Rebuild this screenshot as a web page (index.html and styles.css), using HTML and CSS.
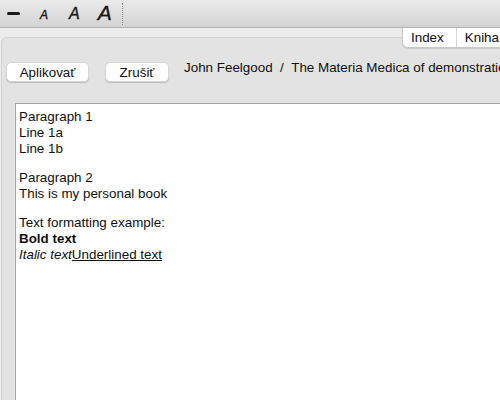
FILE: index.html
```html
<!DOCTYPE html>
<html>
<head>
<meta charset="utf-8">
<link rel="stylesheet" href="styles.css">
</head>
<body>
<div class="window">
  <div class="toolbar">
    <span class="tool dash"></span>
    <span class="tool a a-s">A</span>
    <span class="tool a a-m">A</span>
    <span class="tool a a-l">A</span>
    <span class="sep"></span>
  </div>
  <div class="main">
    <div class="segment">
      <span class="seg seg-first">Index</span>
      <span class="seg">Kniha</span>
    </div>
    <div class="panel">
      <div class="actions">
        <button class="btn btn-apply">Aplikovať</button>
        <button class="btn btn-cancel">Zrušiť</button>
        <span class="crumb">John Feelgood&nbsp; / &nbsp;The Materia Medica of demonstration</span>
      </div>
      <div class="editor">
        <p>Paragraph 1<br>Line 1a<br>Line 1b</p>
        <p>Paragraph 2<br>This is my personal book</p>
        <p>Text formatting example:<br><b>Bold text</b><br><i>Italic text</i><u>Underlined text</u></p>
      </div>
    </div>
  </div>
</div>
</body>
</html>
```
FILE: styles.css
```css
html, body {
  margin: 0;
  padding: 0;
}
body {
  width: 500px;
  height: 400px;
  overflow: hidden;
  background: #ececec;
  font-family: "Liberation Sans", Arial, sans-serif;
  font-size: 13.4px;
  color: #111;
}
.window {
  display: flex;
  flex-direction: column;
  height: 400px;
}
.toolbar {
  flex: none;
  display: flex;
  align-items: center;
  background: linear-gradient(#ebebeb, #d3d3d3);
  border-bottom: 1px solid #b3b3b3;
  box-sizing: border-box;
  height: 28px;
  padding-left: 7px;
}
.tool {
  display: block;
  color: #1a1a1a;
}
.dash {
  width: 13px;
  height: 3px;
  border-radius: 2px;
  background: #1a1a1a;
  margin-right: 20px;
}
.a {
  font-style: italic;
  font-family: "Liberation Sans", Arial, sans-serif;
  line-height: 1;
  -webkit-text-stroke: 0.4px #1a1a1a;
}
.a-s {
  font-size: 12px;
  margin-right: 21px;
  margin-top: 2px;
}
.a-m {
  font-size: 16px;
  margin-right: 18px;
  margin-top: 1px;
}
.a-l {
  font-size: 21px;
  margin-right: 10px;
  margin-top: -2px;
}
.sep {
  width: 0;
  height: 22px;
  border-left: 1px dotted #8a8a8a;
}
.main {
  position: relative;
  flex: 1;
  padding-top: 9px;
}
.segment {
  position: absolute;
  top: 0;
  left: 402px;
  display: flex;
  height: 19px;
  background: #fff;
  border: 1px solid #c8c8c8;
  border-top: none;
  border-radius: 0 0 0 6px;
  box-shadow: 0 1px 1px rgba(0,0,0,0.12);
  z-index: 2;
}
.seg {
  display: flex;
  align-items: center;
  padding: 0 12px 0 8px;
  line-height: 19px;
  white-space: nowrap;
}
.seg-first {
  border-right: 1px solid #d6d6d6;
}
.panel {
  margin-left: 1px;
  height: 100%;
  box-sizing: border-box;
  background: #e3e3e3;
  border-top: 1px solid #d2d2d2;
  border-left: 1px solid #d2d2d2;
  border-top-left-radius: 6px;
  padding: 24px 0 0 13px;
  display: flex;
  flex-direction: column;
  overflow: hidden;
}
.actions {
  display: flex;
  align-items: center;
  margin-left: -9px;
  height: 20px;
  white-space: nowrap;
}
.btn {
  flex: none;
  font-family: "Liberation Sans", Arial, sans-serif;
  font-size: 13.4px;
  color: #111;
  background: #fff;
  border: 1px solid #d6d6d6;
  border-radius: 5px;
  box-shadow: 0 1px 1px rgba(0,0,0,0.18);
  height: 20px;
  padding: 0;
  box-sizing: border-box;
}
.btn-apply {
  width: 83px;
  margin-left: 0;
  margin-right: 16px;
}
.btn-cancel {
  width: 64px;
  margin-right: 15px;
}
.crumb {
  flex: none;
  margin-top: -10px;
  color: #111;
}
.editor {
  margin-top: 21px;
  flex: 1;
  background: #fff;
  border-top: 1px solid #a6a6a6;
  border-left: 1px solid #a6a6a6;
  padding: 5px 0 0 3px;
  line-height: 16px;
}
.editor p {
  margin: 0 0 13px 0;
}
```
